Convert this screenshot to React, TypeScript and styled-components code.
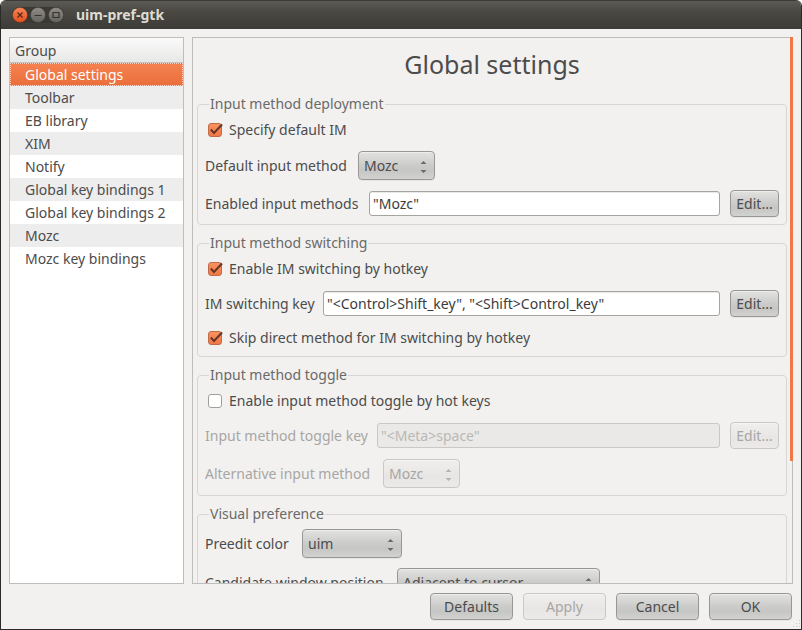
import React, { useId, useState } from "react";
import styled, { createGlobalStyle, css } from "styled-components";

const GlobalStyle = createGlobalStyle`
  *, *::before, *::after { box-sizing: border-box; }
  body {
    margin: 0;
    background: #fff;
    color: #4c4c4c;
    font-family: "Noto Sans", "Open Sans", sans-serif;
    font-size: 14px;
    line-height: 22px;
  }
  button, input, select { font: inherit; color: inherit; margin: 0; }
`;

const Window = styled.div`
  display: flex;
  flex-direction: column;
  height: 100vh;
  border: 1px solid #2b2a28;
  border-top: 0;
  border-radius: 6px 6px 0 0;
  overflow: hidden;
  background: #f2f1f0;
`;

const TitleBar = styled.header`
  display: flex;
  flex: none;
  align-items: center;
  gap: 12px;
  height: 29px;
  padding: 0 11px;
  border-top: 1px solid #3c3b37;
  background: linear-gradient(#5b5a54, #494843 40%, #3c3b37);
`;

const WindowButtons = styled.div`
  display: flex;
  gap: 2px;
  border-radius: 9px;
  background: #3a3934;
`;

const WindowButton = styled.button`
  display: block;
  width: 16px;
  height: 16px;
  padding: 0;
  border: 0;
  background: none;

  svg { display: block; }
`;

const WindowTitle = styled.h1`
  margin: 0;
  color: #dfdbd2;
  font-size: 14px;
  font-weight: 700;
`;

const Main = styled.main`
  display: flex;
  flex: 1;
  gap: 8px;
  min-height: 0;
  padding: 8px 8px 0;
`;

const Sidebar = styled.nav`
  flex: none;
  width: 175px;
  border: 1px solid #bebdb9;
  background: #fff;
`;

const GroupHeader = styled.h2`
  height: 25px;
  margin: 0;
  padding: 2px 5px 0;
  border-bottom: 1px solid #c4c3c0;
  background: linear-gradient(#fafafa, #e7e7e6);
  font-size: 14px;
  font-weight: 400;
`;

const GroupList = styled.ul`
  margin: 0;
  padding: 0;
  list-style: none;
`;

const GroupItem = styled.button<{ $selected: boolean }>`
  display: block;
  width: 100%;
  height: 23px;
  padding: 0 14px;
  border: 1px solid transparent;
  background: #fff;
  line-height: 21px;
  text-align: left;
  white-space: nowrap;

  li:nth-child(even) > & { background: #ededed; }

  ${(p) =>
    p.$selected &&
    css`
      border: 1px dotted #fbd3c2;
      background: linear-gradient(#f58151, #ea6f3b);
      color: #fff;
    `}
`;

const PanelFrame = styled.section`
  position: relative;
  flex: 1;
  min-width: 0;
  border: 1px solid #bebdb9;
`;

const PanelScroll = styled.div`
  height: 100%;
  padding: 0 5px 0 4px;
  overflow: hidden;
`;

const ScrollThumb = styled.div`
  position: absolute;
  top: -1px;
  right: -1px;
  width: 3px;
  height: 424px;
  background: #f07746;
`;

const PanelTitle = styled.h2`
  margin: 0;
  padding-bottom: 3px;
  font-size: 25px;
  font-weight: 400;
  line-height: 52px;
  text-align: center;
`;

const Group = styled.fieldset`
  display: flex;
  flex-direction: column;
  gap: 10px;
  min-width: 0;
  margin: 0 0 7px;
  padding: 4px 7px 7px;
  border: 1px solid #d7d6d4;
  border-radius: 4px;
`;

const Legend = styled.legend`
  margin-left: 4px;
  padding: 0 1px;
  color: #6a6a69;
`;

const Row = styled.div`
  display: flex;
  align-items: center;
  gap: 10px;
`;

const Label = styled.label<{ $width: number; $disabled?: boolean }>`
  flex: none;
  width: ${(p) => p.$width}px;
  color: ${(p) => (p.$disabled ? "#a8a6a3" : "inherit")};
  white-space: nowrap;
`;

const raised = css`
  border: 1px solid #989795;
  border-radius: 4px;
  background: linear-gradient(#e2e2e1, #cbcbca 50%, #c6c6c5 70%, #d2d2d1);
  box-shadow: inset 0 1px 0 #ededec, 0 1px 0 #e6e5e4;

  &:disabled {
    border-color: #c9c8c6;
    background: linear-gradient(#f0efee, #e7e6e5 60%, #ebeae9);
    box-shadow: inset 0 1px 0 #f6f5f4;
    color: #a8a6a3;
    opacity: 1;
  }
`;

const Button = styled.button<{ $wide?: boolean }>`
  flex: none;
  width: ${(p) => (p.$wide ? 83 : 49)}px;
  height: 27px;
  padding: 0;
  line-height: 24px;
  ${raised}
`;

const TextBox = styled.input`
  flex: 1;
  min-width: 0;
  height: 25px;
  padding: 0 3px;
  border: 1px solid #a5a4a1;
  border-radius: 3px;
  background: #fff;
  box-shadow: inset 0 1px 0 #e9e9e8;
  color: #3c3c3c;

  &:disabled {
    border-color: #c9c8c6;
    background: #eae9e7;
    box-shadow: none;
    color: #bab8b5;
  }
`;

const SelectWrap = styled.div<{ $width: number }>`
  position: relative;
  width: ${(p) => p.$width}px;
`;

const Select = styled.select`
  display: block;
  width: 100%;
  height: 29px;
  padding: 0 20px 0 5px;
  appearance: none;
  ${raised}
`;

const SelectArrows = styled.svg<{ $disabled?: boolean }>`
  position: absolute;
  top: 10px;
  right: 8px;
  fill: ${(p) => (p.$disabled ? "#b5b3b0" : "#6b6a69")};
  pointer-events: none;
`;

const CheckLabel = styled.label`
  display: flex;
  align-items: center;
  gap: 7px;
  padding-left: 3px;
`;

const CheckMark = styled.span`
  position: relative;
  display: block;
  width: 14px;
  height: 14px;

  svg { position: absolute; left: 0; top: -1px; pointer-events: none; }
  input:not(:checked) + svg { display: none; }
`;

const CheckInput = styled.input`
  display: block;
  width: 14px;
  height: 14px;
  appearance: none;
  border: 1px solid #a09f9c;
  border-radius: 3px;
  background: #fff;

  &:checked {
    border-color: #c06a48;
    background: linear-gradient(#f9925f, #f07746);
  }
`;

const Footer = styled.footer`
  position: relative;
  display: flex;
  flex: none;
  justify-content: flex-end;
  gap: 10px;
  padding: 9px;
`;

const ResizeGrip = styled.svg`
  position: absolute;
  right: 0;
  bottom: 0;
`;

function CheckBox({ label, on = false }: { label: string; on?: boolean }) {
  const [checked, setChecked] = useState(on);
  return (
    <CheckLabel>
      <CheckMark>
        <CheckInput
          type="checkbox"
          checked={checked}
          onChange={(e) => setChecked(e.target.checked)}
        />
        <svg width="16" height="16" aria-hidden="true">
          <path d="M2.8 7.5 L6 11 L14 2.5" fill="none" stroke="#653625" strokeWidth="2" />
        </svg>
      </CheckMark>
      {label}
    </CheckLabel>
  );
}

type FieldProps = { label: string; labelWidth: number; value: string; disabled?: boolean };

function TextField({ label, labelWidth, value, disabled }: FieldProps) {
  const id = useId();
  return (
    <Row>
      <Label htmlFor={id} $width={labelWidth} $disabled={disabled}>{label}</Label>
      <TextBox id={id} defaultValue={value} disabled={disabled} />
      <Button type="button" disabled={disabled}>Edit...</Button>
    </Row>
  );
}

function SelectField({ label, labelWidth, value, disabled, width }: FieldProps & { width: number }) {
  const id = useId();
  return (
    <Row>
      <Label htmlFor={id} $width={labelWidth} $disabled={disabled}>{label}</Label>
      <SelectWrap $width={width}>
        <Select id={id} disabled={disabled}>
          <option>{value}</option>
        </Select>
        <SelectArrows $disabled={disabled} width="7" height="12" aria-hidden="true">
          <path d="M0.5 3 L3.5 0 L6.5 3 Z M0.5 9 L3.5 12 L6.5 9 Z" />
        </SelectArrows>
      </SelectWrap>
    </Row>
  );
}

const groups = [
  "Global settings",
  "Toolbar",
  "EB library",
  "XIM",
  "Notify",
  "Global key bindings 1",
  "Global key bindings 2",
  "Mozc",
  "Mozc key bindings",
];

const windowIcons = [
  { name: "Close", top: "#f8865c", bottom: "#e2501c", edge: "#5c2412", glyph: "M5.5 5.5 L10.5 10.5 M10.5 5.5 L5.5 10.5" },
  { name: "Minimize", top: "#8f8d86", bottom: "#65635d", edge: "#33322e", glyph: "M4.5 8.5 H11.5" },
  { name: "Maximize", top: "#8f8d86", bottom: "#65635d", edge: "#33322e", glyph: "M5 5.5 H11 V10.5 H5 Z" },
];

export default function App() {
  const [selected, setSelected] = useState(groups[0]);
  return (
    <>
      <GlobalStyle />
      <Window>
        <TitleBar>
          <WindowButtons>
            {windowIcons.map((icon) => (
              <WindowButton key={icon.name} type="button" aria-label={icon.name}>
                <svg width="16" height="16">
                  <defs>
                    <linearGradient id={icon.name} x1="0" y1="0" x2="0" y2="1">
                      <stop offset="0" stopColor={icon.top} />
                      <stop offset="1" stopColor={icon.bottom} />
                    </linearGradient>
                  </defs>
                  <circle cx="8" cy="8" r="7.5" fill={`url(#${icon.name})`} stroke={icon.edge} strokeOpacity="0.3" />
                  <path d={icon.glyph} fill="none" stroke={icon.edge} strokeWidth="1.2" />
                </svg>
              </WindowButton>
            ))}
          </WindowButtons>
          <WindowTitle>uim-pref-gtk</WindowTitle>
        </TitleBar>
        <Main>
          <Sidebar aria-label="Group">
            <GroupHeader>Group</GroupHeader>
            <GroupList>
              {groups.map((name) => (
                <li key={name}>
                  <GroupItem type="button" $selected={name === selected} onClick={() => setSelected(name)}>
                    {name}
                  </GroupItem>
                </li>
              ))}
            </GroupList>
          </Sidebar>
          <PanelFrame>
            <PanelScroll>
              <PanelTitle>Global settings</PanelTitle>
              <Group>
                <Legend>Input method deployment</Legend>
                <CheckBox label="Specify default IM" on />
                <SelectField label="Default input method" labelWidth={143} value="Mozc" width={77} />
                <TextField label="Enabled input methods" labelWidth={154} value={'"Mozc"'} />
              </Group>
              <Group>
                <Legend>Input method switching</Legend>
                <CheckBox label="Enable IM switching by hotkey" on />
                <TextField label="IM switching key" labelWidth={108} value={'"<Control>Shift_key", "<Shift>Control_key"'} />
                <CheckBox label="Skip direct method for IM switching by hotkey" on />
              </Group>
              <Group>
                <Legend>Input method toggle</Legend>
                <CheckBox label="Enable input method toggle by hot keys" />
                <TextField label="Input method toggle key" labelWidth={162} value={'"<Meta>space"'} disabled />
                <SelectField label="Alternative input method" labelWidth={168} value="Mozc" width={77} disabled />
              </Group>
              <Group>
                <Legend>Visual preference</Legend>
                <SelectField label="Preedit color" labelWidth={87} value="uim" width={100} />
                <SelectField label="Candidate window position" labelWidth={182} value="Adjacent to cursor" width={203} />
              </Group>
            </PanelScroll>
            <ScrollThumb />
          </PanelFrame>
        </Main>
        <Footer>
          <Button type="button" $wide>Defaults</Button>
          <Button type="button" $wide disabled>Apply</Button>
          <Button type="button" $wide>Cancel</Button>
          <Button type="button" $wide>OK</Button>
          <ResizeGrip width="10" height="10" aria-hidden="true">
            <path
              d="M8.5 1v1M8.5 4v1M5.5 4v1M8.5 7v1M5.5 7v1M2.5 7v1"
              stroke="#c9c8c6"
            />
          </ResizeGrip>
        </Footer>
      </Window>
    </>
  );
}
